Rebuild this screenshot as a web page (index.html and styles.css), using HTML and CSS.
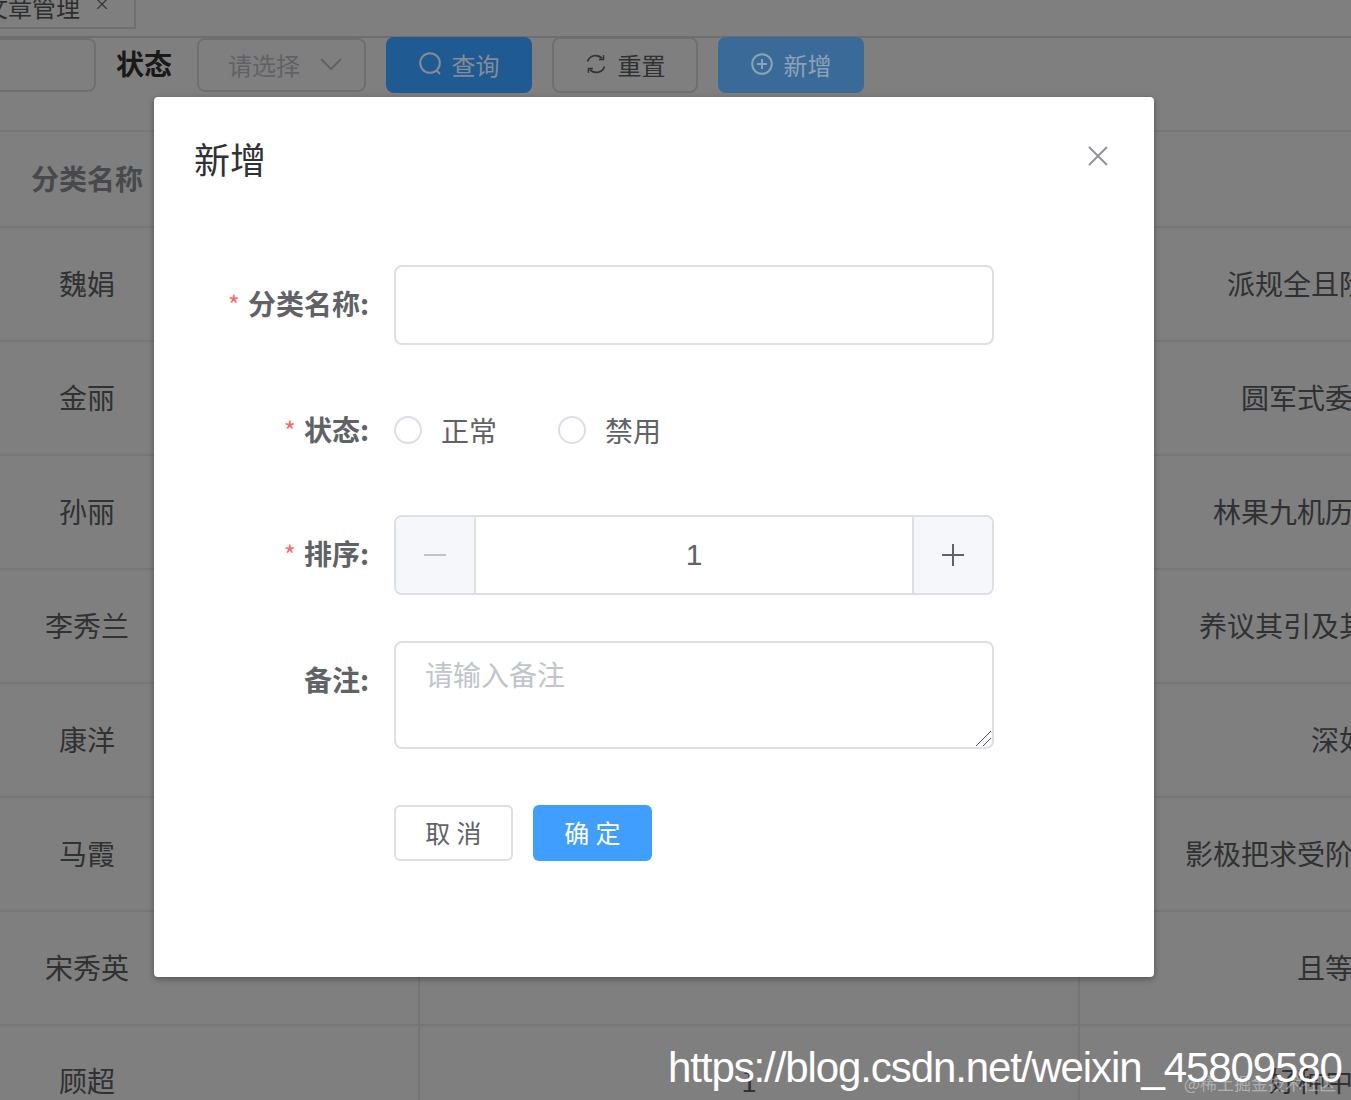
FILE: index.html
```html
<!DOCTYPE html>
<html lang="zh-CN">
<head>
<meta charset="utf-8">
<title>新增</title>
<link rel="stylesheet" href="styles.css">
</head>
<body>
<div class="page">
  <div class="tabs"><div class="tab"><span>文章管理</span><i class="tab-x">×</i></div></div>
  <div class="toolbar">
    <div class="field-stub"></div>
    <strong class="tool-label">状态</strong>
    <div class="select"><span>请选择</span>
      <svg class="chev" viewBox="0 0 22 14"><path d="M1 2l10 10L21 2" fill="none" stroke="currentColor" stroke-width="2"/></svg>
    </div>
    <div class="tbtn primary">
      <svg class="ic" viewBox="0 0 22 24"><circle cx="11" cy="11" r="9.8" fill="none" stroke="currentColor" stroke-width="2"/><path d="M17 18l4 4" stroke="currentColor" stroke-width="2"/></svg>
      <span>查询</span></div>
    <div class="tbtn plain">
      <svg class="ic reset" viewBox="0 0 22 24"><path d="M2.5 9.5A8.5 8.5 0 0 1 17 6.5M19.5 14.5A8.5 8.5 0 0 1 5 17.5" fill="none" stroke="currentColor" stroke-width="1.7"/><path d="M18.5 3v4.5H14M3.5 21v-4.5H8" fill="none" stroke="currentColor" stroke-width="1.5"/></svg>
      <span>重置</span></div>
    <div class="tbtn soft">
      <svg class="ic" viewBox="0 0 22 24"><circle cx="11" cy="12" r="9.8" fill="none" stroke="currentColor" stroke-width="2"/><path d="M11 7v10M6 12h10" stroke="currentColor" stroke-width="2"/></svg>
      <span>新增</span></div>
  </div>
  <div class="table">
    <div class="row head"><div class="c1">分类名称</div><div class="c2"></div><div class="c3"></div><div class="c4"></div></div>
    <div class="row"><div class="c1">魏娟</div><div class="c2"></div><div class="c3"></div><div class="c4">派规全且阶段研究生活方式</div></div>
    <div class="row"><div class="c1">金丽</div><div class="c2"></div><div class="c3"></div><div class="c4">圆军式委员会议论文章节</div></div>
    <div class="row"><div class="c1">孙丽</div><div class="c2"></div><div class="c3"></div><div class="c4">林果九机历史文化交流中心站</div></div>
    <div class="row"><div class="c1">李秀兰</div><div class="c2"></div><div class="c3"></div><div class="c4">养议其引及其他相关内容信息表</div></div>
    <div class="row"><div class="c1">康洋</div><div class="c2"></div><div class="c3"></div><div class="c4">深如此类别名</div></div>
    <div class="row"><div class="c1">马霞</div><div class="c2"></div><div class="c3"></div><div class="c4">影极把求受阶段性成果展示内容页</div></div>
    <div class="row"><div class="c1">宋秀英</div><div class="c2"></div><div class="c3"></div><div class="c4">且等待处理状态</div></div>
    <div class="row"><div class="c1">顾超</div><div class="c2"></div><div class="c3">1</div><div class="c4">好种中题目分类内容</div></div>
  </div>
</div>
<div class="mask"></div>
<section class="dialog">
  <header class="dialog-head">
    <h2 class="dialog-title">新增</h2>
    <svg class="close" viewBox="0 0 20 20"><path d="M1 1l18 18M19 1L1 19" stroke="currentColor" stroke-width="2"/></svg>
  </header>
  <form class="form">
    <div class="item">
      <label class="label req">分类名称:</label>
      <div class="input"></div>
    </div>
    <div class="item radios">
      <label class="label req">状态:</label>
      <div class="radio-group">
        <span class="radio"><i class="dot"></i>正常</span>
        <span class="radio"><i class="dot"></i>禁用</span>
      </div>
    </div>
    <div class="item">
      <label class="label req">排序:</label>
      <div class="number">
        <span class="step minus"><svg viewBox="0 0 22 22"><path d="M0 11h22" stroke="currentColor" stroke-width="2"/></svg></span>
        <span class="num">1</span>
        <span class="step plus"><svg viewBox="0 0 22 22"><path d="M0 11h22M11 0v22" stroke="currentColor" stroke-width="2"/></svg></span>
      </div>
    </div>
    <div class="item area-item">
      <label class="label">备注:</label>
      <div class="area">请输入备注
        <svg class="grip" viewBox="0 0 16 16"><path d="M1 16L16 1M8 16l8-8" stroke="#555" stroke-width="1" fill="none"/></svg>
      </div>
    </div>
    <div class="actions">
      <span class="btn cancel">取 消</span>
      <span class="btn ok">确 定</span>
    </div>
  </form>
</section>
<div class="url">https://blog.csdn.net/weixin_45809580</div>
<div class="mark">@稀土掘金技术社区</div>
</body>
</html>
```
FILE: styles.css
```css
* { box-sizing: border-box; }
html, body { margin: 0; height: 1100px; overflow: hidden; }
body {
  position: relative;
  width: 1351px;
  background: #fff;
  font-family: "Noto Sans CJK SC", "Noto Sans", sans-serif;
  font-size: 28px;
  color: #606266;
}
.page { height: 1100px; overflow: hidden; }
.tabs { height: 38px; border-bottom: 2px solid #dcdcdc; }
.tab {
  width: 136px; height: 29px;
  border: 2px solid #e0e0e0; border-left: 0; border-top: 0;
  display: flex; align-items: flex-end;
  font-size: 24px; line-height: 24px; color: #5d5d5d;
  white-space: nowrap;
  padding-bottom: 8px;
}
.tab span { margin-left: -16px; }
.tab-x { font-style: normal; font-size: 16px; margin-left: 14px; line-height: 16px; margin-bottom: 8px; }
.toolbar { height: 92px; display: flex; align-items: flex-start; }
.field-stub { width: 96px; height: 54px; flex: none; border: 2px solid #dcdfe6; border-left: 0; border-radius: 0 8px 8px 0; }
.tool-label { margin-left: 20px; width: 56px; line-height: 50px; color: #333; white-space: nowrap; }
.select {
  margin-left: 25px; width: 169px; height: 54px; flex: none;
  border: 2px solid #dcdfe6; border-radius: 8px;
  display: flex; align-items: center; padding: 0 0 2px 29px;
  font-size: 24px; color: #c0c4cc;
}
.chev { width: 22px; height: 14px; margin-left: 20px; color: #c0c4cc; }
.tbtn {
  width: 146px; height: 56px; border-radius: 8px; flex: none; margin-top: -1px; padding-bottom: 2px;
  display: flex; align-items: center; justify-content: center; gap: 11px;
  font-size: 24px;
}
.primary { position: relative; z-index: 1; margin-left: 20px; background: #205a92; color: #848c94; }
.plain { margin-left: 20px; border: 2px solid #dcdfe6; color: #606266; }
.soft { position: relative; z-index: 1; margin-left: 20px; background: #3a6a98; color: #8ea2b6; }
.ic { width: 22px; height: 24px; flex: none; }
.table { border-top: 2px solid #f0f0f0; }
.row { display: flex; height: 114px; border-bottom: 2px solid #ececec; }
.row.head { height: 96px; font-weight: 700; color: #909399; }
.row > div { display: flex; align-items: center; justify-content: center; white-space: nowrap; padding-bottom: 3px; }
.c1 { width: 174px; flex: none; }
.c2 { width: 246px; flex: none; border-right: 2px solid #ececec; }
.c3 { width: 660px; flex: none; border-right: 2px solid #ececec; }
.c4 { width: 630px; flex: none; }
.head .c2, .head .c3 { border-right-color: #f4f4f4; }
.row:last-child > div { align-items: flex-start; padding: 34px 0 0; }
.mask { position: absolute; inset: 0; background: rgba(0, 0, 0, .5); }
.dialog {
  position: absolute; left: 154px; top: 97px; width: 1000px; height: 880px; z-index: 2;
  background: #fff; border-radius: 4px;
  box-shadow: 0 2px 6px rgba(0, 0, 0, .35);
}
.dialog-head { display: flex; justify-content: space-between; align-items: flex-start; padding: 36px 46px 0 40px; height: 168px; }
.dialog-title { margin: 0; font-size: 36px; line-height: 50px; font-weight: 400; color: #303133; }
.close { width: 20px; height: 20px; margin-top: 13px; color: #909399; }
.item { display: flex; margin-bottom: 46px; height: 80px; }
.label {
  width: 215px; flex: none; text-align: right; font-weight: 700; white-space: nowrap;
  line-height: 76px; color: #606266;
}
.req::before { content: "*"; color: #f56c6c; margin-right: 8px; font-weight: 400; font-size: 26px; }
.input { margin-left: 25px; width: 600px; height: 80px; border: 2px solid #dcdfe6; border-radius: 8px; }
.radios { height: 78px; }
.radios .label { line-height: 76px; }
.radio-group { margin-left: 25px; display: flex; align-items: center; gap: 61px; padding-bottom: 1px; }
.radio { display: flex; align-items: center; gap: 19px; line-height: 40px; }
.dot { width: 28px; height: 28px; border: 2px solid #dcdfe6; border-radius: 50%; display: block; }
.number {
  margin-left: 25px; width: 600px; height: 80px; display: flex;
  border: 2px solid #dcdfe6; border-radius: 8px; overflow: hidden;
}
.step { width: 80px; flex: none; background: #f5f7fa; display: flex; align-items: center; justify-content: center; }
.step svg { width: 22px; height: 22px; }
.minus { border-right: 2px solid #dcdfe6; color: #c0c4cc; }
.plus { border-left: 2px solid #dcdfe6; color: #606266; }
.num { flex: 1; text-align: center; line-height: 76px; font-size: 30px; font-family: "Liberation Sans", sans-serif; }
.area-item { height: 108px; margin-bottom: 56px; }
.area-item .label { line-height: 76px; }
.area {
  position: relative; margin-left: 25px; width: 600px; height: 108px;
  border: 2px solid #dcdfe6; border-radius: 8px;
  padding: 10px 29px; line-height: 42px; color: #c0c4cc;
}
.grip { position: absolute; right: 1px; bottom: 1px; width: 16px; height: 16px; }
.actions { margin-left: 240px; display: flex; gap: 20px; }
.btn {
  width: 119px; height: 56px; border-radius: 6px; font-size: 25px; letter-spacing: .3px; padding-bottom: 2px;
  display: flex; align-items: center; justify-content: center; white-space: pre;
}
.cancel { border: 2px solid #dcdfe6; color: #606266; }
.ok { background: #409eff; color: #fff; }
.url {
  position: absolute; z-index: 3; left: 668px; top: 1040px; white-space: nowrap;
  font-family: "Liberation Sans", sans-serif; font-size: 42px; line-height: 56px; color: #fff;
  letter-spacing: -1.1px;
}
.mark {
  position: absolute; z-index: 3; left: 1184px; top: 1072px; white-space: nowrap;
  font-size: 17px; line-height: 22px; color: rgba(255, 255, 255, .4);
}
```
